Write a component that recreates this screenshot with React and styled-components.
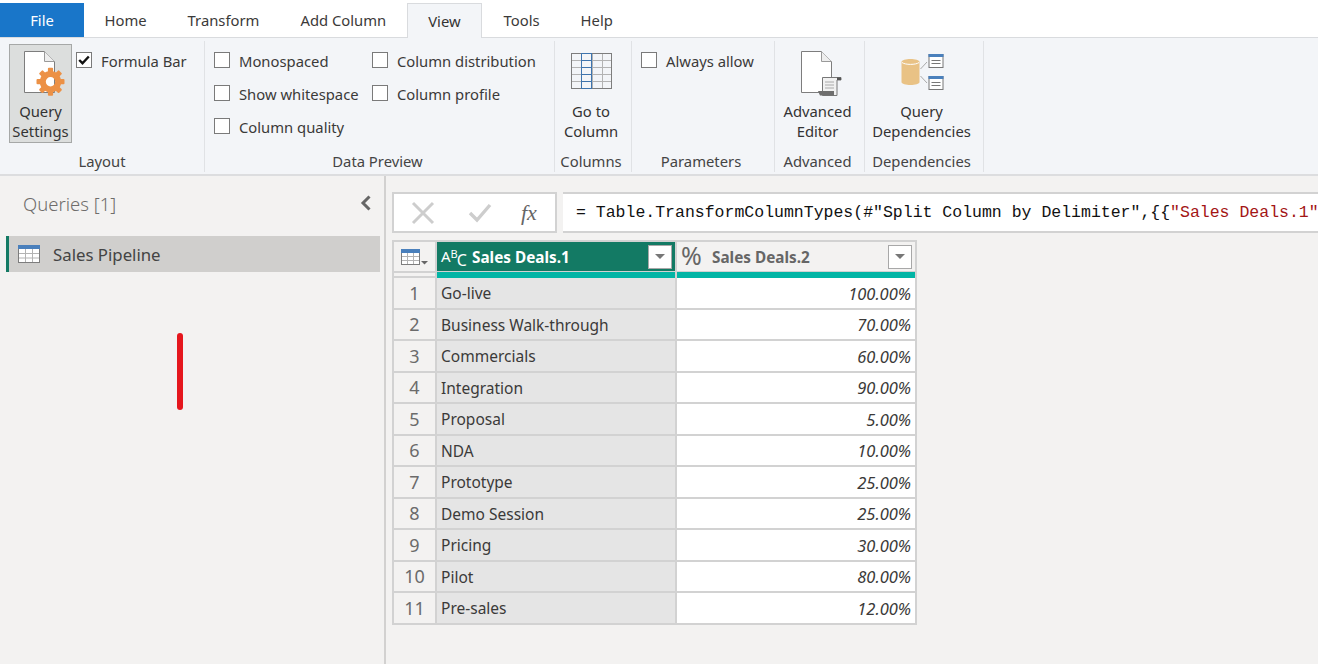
import React from 'react';
import styled, { createGlobalStyle } from 'styled-components';

const GlobalStyle = createGlobalStyle`
    html, body {
        margin: 0;
        padding: 0;
        height: 100%;
        overflow: hidden;
        background: #F3F2F1;
        font-family: "Noto Sans", "Open Sans", sans-serif;
    }
    #root { height: 100%; }
`;

const Page = styled.div`
    display: flex;
    flex-direction: column;
    width: 1318px;
    height: 664px;
    position: relative;
    color: #333;
`;

const TabBar = styled.nav`
    display: flex;
    align-items: stretch;
    height: 34px;
    padding-top: 3px;
    background: #fff;
    border-bottom: 1px solid #D9DBDE;
`;

const Tab = styled.div`
    display: flex;
    align-items: center;
    padding: 0 20.5px;
    font-size: 14.8px;
    color: ${p => p.$active ? '#333' : '#3b3a39'};
    ${p => p.$active && `
        background: #F3F5F8;
        padding: 0 20px;
        border: 1px solid #D9DBDE;
        border-bottom: none;
        margin: 0 1.5px -1px .5px;
    `}
`;

const FileTab = styled(Tab)`
    width: 84px;
    padding: 0;
    justify-content: center;
    background: #1976C9;
    color: #fff;
    box-sizing: border-box;
`;

const Ribbon = styled.section`
    display: flex;
    height: 131px;
    padding: 3px 0 2px;
    background: #F3F5F8;
    border-bottom: 2px solid #DCDDDF;
    box-sizing: content-box;
`;

const Group = styled.div`
    display: flex;
    flex-direction: column;
    width: ${p => p.$w}px;
    height: 131px;
    padding-right: ${p => p.$pr || 0}px;
    border-right: 1px solid #E0E2E5;
    box-sizing: border-box;
`;

const GroupBody = styled.div`
    flex: 1;
    display: flex;
    padding: ${p => p.$pad || '0'};
    min-height: 0;
`;

const GroupLabel = styled.div`
    height: 22px;
    line-height: 22px;
    text-align: center;
    font-size: 14.8px;
    color: #444;
`;

const BigButton = styled.div`
    display: flex;
    flex-direction: column;
    align-items: center;
    width: ${p => p.$w || 'auto'};
    height: 99px;
    box-sizing: border-box;
    flex: ${p => p.$w ? 'none' : 1};
    margin-top: 3px;
    ${p => p.$pressed && `
        background: #DCDEDD;
        border: 1px solid #A6A8A7;
    `}
`;

const IconSlot = styled.div`
    height: ${p => p.$h || 57}px;
    display: flex;
    align-items: flex-end;
    justify-content: center;
    padding: 0 0 ${p => p.$pb || 0}px ${p => p.$pl || 0}px;
    box-sizing: border-box;
`;

const BigText = styled.div`
    text-align: center;
    font-size: 14.8px;
    line-height: 20px;
    color: #333;
    white-space: nowrap;
`;

const CheckColumn = styled.div`
    padding: 3px 0 0 4px;
`;

const CheckRow = styled.label`
    display: flex;
    align-items: center;
    height: 33px;
    font-size: 14.8px;
    color: #3b3a39;
    white-space: nowrap;
`;

const Box = styled.span`
    width: 16px;
    height: 16px;
    margin: -1px 9px 0 0;
    flex: none;
    background: #fff;
    border: 1px solid #7a7a7a;
    box-sizing: border-box;
    display: flex;
    align-items: center;
    justify-content: center;
`;

const CheckGrid = styled.div`
    display: grid;
    grid-template-columns: 158px auto;
    grid-auto-flow: column;
    grid-template-rows: repeat(3, 33px);
`;

const Workspace = styled.div`
    flex: 1;
    display: flex;
    min-height: 0;
`;

const Sidebar = styled.aside`
    width: 384px;
    flex: none;
    background: #F3F2F1;
    border-right: 2px solid #D2D1D0;
`;

const QueriesHead = styled.div`
    display: flex;
    align-items: center;
    justify-content: space-between;
    height: 54px;
    padding: 0 12px 0 23px;
`;

const QueriesTitle = styled.h2`
    margin: 0;
    font-size: 18.5px;
    font-weight: 300;
    color: #6f6d6b;
`;

const QueryItem = styled.div`
    display: flex;
    align-items: center;
    height: 36px;
    margin: 6px 4px 0 6px;
    padding-left: 9px;
    gap: 13px;
    font-size: 16.8px;
    color: #444;
    background: #D0CFCD;
    border-left: 3px solid #137A64;
`;

const RedMark = styled.div`
    position: absolute;
    left: 177px;
    top: 333px;
    width: 6px;
    height: 77px;
    border-radius: 3px;
    background: #E5161D;
`;

const Main = styled.main`
    flex: 1;
    min-width: 0;
    padding: 16px 0 0 6px;
    overflow: hidden;
`;

const FormulaBar = styled.div`
    display: flex;
    gap: 6px;
    height: 41px;
`;

const FormulaButtons = styled.div`
    display: flex;
    align-items: center;
    flex: none;
    width: 165px;
    padding-left: 16px;
    gap: 32px;
    background: #fff;
    border: 2px solid #D2D2D2;
    box-sizing: border-box;
`;

const Fx = styled.span`
    font-family: "Liberation Serif", serif;
    font-style: italic;
    font-size: 22px;
    color: #666;
    margin-left: -3px;
`;

const FormulaInput = styled.div`
    flex: 1;
    display: flex;
    align-items: center;
    padding-left: 13px;
    background: #fff;
    border: solid #D2D2D2;
    border-width: 2px 0;
    box-sizing: border-box;
    font-family: "Liberation Mono", monospace;
    font-size: 16.5px;
    color: #111;
    white-space: nowrap;
    overflow: hidden;
`;

const Str = styled.span`
    color: #A31515;
`;

const Table = styled.div`
    width: 525px;
    margin-top: 7px;
    padding: 2px;
    box-sizing: border-box;
    background: #D2D2D2;
`;

const HeadRow = styled.div`
    display: grid;
    grid-template-columns: 41px 238px 238px;
    column-gap: 2px;
`;

const HeadCol = styled.div`
    display: flex;
    flex-direction: column;
    height: 36px;
`;

const HeadBar = styled.div`
    display: flex;
    align-items: center;
    height: 29px;
    flex: none;
    padding: 0 3px 0 4px;
    font-size: 15.3px;
    font-weight: 700;
    background: ${p => p.$selected ? '#137A64' : '#F3F2F1'};
    color: ${p => p.$selected ? '#fff' : '#666'};
`;

const CornerBar = styled(HeadBar)`
    padding: 0 0 0 7px;
`;

const Strip = styled.div`
    height: 6px;
    margin-top: 1px;
    background: #02B5A5;
`;

const CornerStrip = styled.div`
    height: 3px;
    margin-top: 2px;
    background: #F3F2F1;
`;

const HeadName = styled.span`
    flex: 1;
    margin-left: ${p => p.$ml}px;
`;

const TypeAbc = styled.span`
    display: inline-flex;
    align-items: center;
    width: 24px;
    font-weight: 400;
    font-size: 15px;
    line-height: 1;
    color: inherit;

    sup { font-size: 11px; line-height: 1; margin-top: -6px; }
    sub { font-size: 16px; line-height: 1; margin-top: 6px; margin-left: -1px; }
`;

const TypePercent = styled.span`
    width: 24px;
    font-weight: 400;
    font-size: 25px;
    line-height: 1;
    color: #666;
    transform: translateY(-1px);
`;

const Drop = styled.span`
    display: flex;
    align-items: center;
    justify-content: center;
    flex: none;
    width: 24px;
    height: 24px;
    background: #fff;
    border: 1px solid #A8A8A8;
    box-sizing: border-box;
`;

const Arrow = styled.span`
    width: 0;
    height: 0;
    border: 5px solid transparent;
    border-top: 5px solid #777;
    border-bottom: 0;
`;

const Rows = styled.div`
    display: grid;
    grid-template-columns: 41px 238px 238px;
    grid-auto-rows: 29.5px;
    gap: 2px;
`;

const IndexCell = styled.div`
    display: flex;
    align-items: center;
    justify-content: center;
    background: #F3F2F1;
    font-size: 18px;
    color: #6b6b6b;
`;

const TextCell = styled.div`
    display: flex;
    align-items: center;
    padding: 1px 0 0 4px;
    box-sizing: border-box;
    background: #E5E5E5;
    font-size: 15.5px;
    color: #3b3a39;
`;

const ValueCell = styled.div`
    display: flex;
    align-items: center;
    justify-content: flex-end;
    padding: 1px 4px 0 0;
    box-sizing: border-box;
    background: #fff;
    font-size: 16.5px;
    font-style: italic;
    color: #3b3a39;
`;

const QuerySettingsIcon = () => {
    const teeth = [0, 45, 90, 135, 180, 225, 270, 315];
    return (
        <svg width="42" height="46" viewBox="0 0 42 46">
            <path d="M1.5 .5H21.5L31.5 10.5V41.5H1.5Z" fill="#fff" stroke="#7d7d7d" strokeWidth="1" />
            <path d="M21.5 .5V10.5H31.5" fill="#eee" stroke="#9a9a9a" strokeWidth="1" />
            <g transform="translate(27.5 30.7)">
                {teeth.map(a => (
                    <rect key={a} x="-2.6" y="-14" width="5.2" height="6" rx="1" fill="#EC9146" transform={`rotate(${a})`} />
                ))}
                <circle r="7.7" fill="none" stroke="#EC9146" strokeWidth="6" />
            </g>
        </svg>
    );
};

const GoToColumnIcon = () => (
    <svg width="42" height="37" viewBox="0 0 42 37">
        <g fill="none" stroke="#b3b3b3" strokeWidth="1">
            <path d="M.5 7.5H41M.5 14.5H41M.5 21.5H41M.5 28.5H41M21.5 1V36M31.5 1V36" />
        </g>
        <rect x=".5" y=".5" width="40" height="35" fill="none" stroke="#7d7d7d" />
        <rect x="10.5" y=".5" width="10" height="35" fill="none" stroke="#3E74AD" />
        <path d="M11 7.5H20M11 14.5H20M11 21.5H20M11 28.5H20" stroke="#3E74AD" />
    </svg>
);

const AdvancedEditorIcon = () => (
    <svg width="42" height="46" viewBox="0 0 42 46">
        <path d="M1.5 .5H21.5L31.5 10.5V41.5H1.5Z" fill="#fff" stroke="#7d7d7d" />
        <path d="M21.5 .5V10.5H31.5" fill="#eee" stroke="#9a9a9a" />
        <path d="M22.5 26.5H41V29H37V44.5H22.5Z" fill="#f1f1f1" stroke="#777" />
        <path d="M37 26.5H41V29H37Z" fill="#555" />
        <path d="M18 40H34V44.5H20Z" fill="#6e6e6e" />
        <path d="M25 31H34M25 34H34M25 37H34" stroke="#aaa" />
    </svg>
);

const MiniTable = ({ y }) => (
    <g transform={`translate(29.5 ${y})`}>
        <rect x=".5" y=".5" width="14" height="13" fill="#fff" stroke="#777" />
        <rect x="0" y="0" width="15" height="3" fill="#4A80BC" />
        <path d="M3 6.5H12M3 9.5H12" stroke="#777" />
    </g>
);

const DependenciesIcon = () => (
    <svg width="46" height="38" viewBox="0 0 46 38">
        <path d="M2.5 8C2.5 4 20.5 4 20.5 8V28C20.5 32 2.5 32 2.5 28Z" fill="#E9C285" />
        <path d="M3 8.5C6 11 17 11 20 8.5" fill="none" stroke="#fff" />
        <path d="M21.5 15L28 8M21.5 22L28 29" stroke="#aaa" strokeWidth="1" />
        <MiniTable y={0} />
        <MiniTable y={22} />
    </svg>
);

const TableIcon = () => (
    <svg width="22" height="18" viewBox="0 0 22 18">
        <rect x=".5" y=".5" width="21" height="17" fill="#fff" stroke="#7d7d7d" />
        <rect x="0" y="0" width="22" height="4" fill="#4A80BC" />
        <path d="M1 8.5H21M1 13H21M7.5 4V17M14.5 4V17" stroke="#b3b3b3" />
    </svg>
);

const CornerTableIcon = () => (
    <svg width="27" height="16" viewBox="0 0 27 16">
        <rect x=".5" y=".5" width="18" height="15" fill="#fff" stroke="#7d7d7d" />
        <rect x="0" y="0" width="19" height="4" fill="#4A80BC" />
        <path d="M1 7.5H18M1 11.5H18M6.5 4V15M12.5 4V15" stroke="#b3b3b3" />
        <path d="M20 12H27L23.5 15.5Z" fill="#666" />
    </svg>
);

const CheckMark = () => (
    <svg width="12" height="10" viewBox="0 0 12 10">
        <path d="M1.2 5L4.5 8.2L10.8 1.5" fill="none" stroke="#111" strokeWidth="2.4" />
    </svg>
);

const CheckItem = ({ label, checked }) => (
    <CheckRow>
        <Box>{checked && <CheckMark />}</Box>
        {label}
    </CheckRow>
);

const deals = [
    ['Go-live', '100.00%'],
    ['Business Walk-through', '70.00%'],
    ['Commercials', '60.00%'],
    ['Integration', '90.00%'],
    ['Proposal', '5.00%'],
    ['NDA', '10.00%'],
    ['Prototype', '25.00%'],
    ['Demo Session', '25.00%'],
    ['Pricing', '30.00%'],
    ['Pilot', '80.00%'],
    ['Pre-sales', '12.00%'],
];

const App = () => (
    <Page>
        <GlobalStyle />
        <TabBar>
            <FileTab>File</FileTab>
            <Tab>Home</Tab>
            <Tab>Transform</Tab>
            <Tab>Add Column</Tab>
            <Tab $active>View</Tab>
            <Tab>Tools</Tab>
            <Tab>Help</Tab>
        </TabBar>
        <Ribbon>
            <Group $w={205}>
                <GroupBody $pad="0 0 0 9px">
                    <BigButton $w="63px" $pressed>
                        <IconSlot $h={56} $pb={4} $pl={6}><QuerySettingsIcon /></IconSlot>
                        <BigText>Query<br />Settings</BigText>
                    </BigButton>
                    <CheckColumn>
                        <CheckItem label="Formula Bar" checked />
                    </CheckColumn>
                </GroupBody>
                <GroupLabel>Layout</GroupLabel>
            </Group>
            <Group $w={350} $pr={4}>
                <GroupBody $pad="3px 0 0 9px">
                    <CheckGrid>
                        <CheckItem label="Monospaced" />
                        <CheckItem label="Show whitespace" />
                        <CheckItem label="Column quality" />
                        <CheckItem label="Column distribution" />
                        <CheckItem label="Column profile" />
                    </CheckGrid>
                </GroupBody>
                <GroupLabel>Data Preview</GroupLabel>
            </Group>
            <Group $w={77} $pr={4}>
                <GroupBody>
                    <BigButton>
                        <IconSlot $pb={11} $pl={2}><GoToColumnIcon /></IconSlot>
                        <BigText>Go to<br />Column</BigText>
                    </BigButton>
                </GroupBody>
                <GroupLabel>Columns</GroupLabel>
            </Group>
            <Group $w={143} $pr={4}>
                <GroupBody $pad="3px 0 0 9px">
                    <div><CheckItem label="Always allow" /></div>
                </GroupBody>
                <GroupLabel>Parameters</GroupLabel>
            </Group>
            <Group $w={90} $pr={4}>
                <GroupBody>
                    <BigButton>
                        <IconSlot $pb={4} $pl={6}><AdvancedEditorIcon /></IconSlot>
                        <BigText>Advanced<br />Editor</BigText>
                    </BigButton>
                </GroupBody>
                <GroupLabel>Advanced</GroupLabel>
            </Group>
            <Group $w={119} $pr={5}>
                <GroupBody>
                    <BigButton>
                        <IconSlot $pb={9}><DependenciesIcon /></IconSlot>
                        <BigText>Query<br />Dependencies</BigText>
                    </BigButton>
                </GroupBody>
                <GroupLabel>Dependencies</GroupLabel>
            </Group>
        </Ribbon>
        <Workspace>
            <Sidebar>
                <QueriesHead>
                    <QueriesTitle>Queries [1]</QueriesTitle>
                    <svg width="12" height="16" viewBox="0 0 12 16">
                        <path d="M9.5 1.5L3 8L9.5 14.5" fill="none" stroke="#666" strokeWidth="3" />
                    </svg>
                </QueriesHead>
                <QueryItem>
                    <TableIcon />
                    Sales Pipeline
                </QueryItem>
            </Sidebar>
            <Main>
                <FormulaBar>
                    <FormulaButtons>
                        <svg width="26" height="24" viewBox="0 0 26 24">
                            <path d="M3 2L23 22M23 2L3 22" stroke="#CDCDCD" strokeWidth="3" />
                        </svg>
                        <svg width="24" height="20" viewBox="0 0 24 20">
                            <path d="M2 10L9 17L22 2" fill="none" stroke="#CDCDCD" strokeWidth="3.4" />
                        </svg>
                        <Fx>fx</Fx>
                    </FormulaButtons>
                    <FormulaInput>
                        = Table.TransformColumnTypes(#"Split Column by Delimiter",{'{{'}<Str>"Sales Deals.1"</Str>
                    </FormulaInput>
                </FormulaBar>
                <Table>
                    <HeadRow>
                        <HeadCol>
                            <CornerBar><CornerTableIcon /></CornerBar>
                            <CornerStrip />
                        </HeadCol>
                        <HeadCol>
                            <HeadBar $selected>
                                <TypeAbc>A<sup>B</sup><sub>C</sub></TypeAbc>
                                <HeadName $ml={7}>Sales Deals.1</HeadName>
                                <Drop><Arrow /></Drop>
                            </HeadBar>
                            <Strip />
                        </HeadCol>
                        <HeadCol>
                            <HeadBar>
                                <TypePercent>%</TypePercent>
                                <HeadName $ml={7}>Sales Deals.2</HeadName>
                                <Drop><Arrow /></Drop>
                            </HeadBar>
                            <Strip />
                        </HeadCol>
                    </HeadRow>
                    <Rows>
                        {deals.map(([name, value], i) => (
                            <React.Fragment key={name}>
                                <IndexCell>{i + 1}</IndexCell>
                                <TextCell>{name}</TextCell>
                                <ValueCell>{value}</ValueCell>
                            </React.Fragment>
                        ))}
                    </Rows>
                </Table>
            </Main>
        </Workspace>
        <RedMark />
    </Page>
);

export default App;
